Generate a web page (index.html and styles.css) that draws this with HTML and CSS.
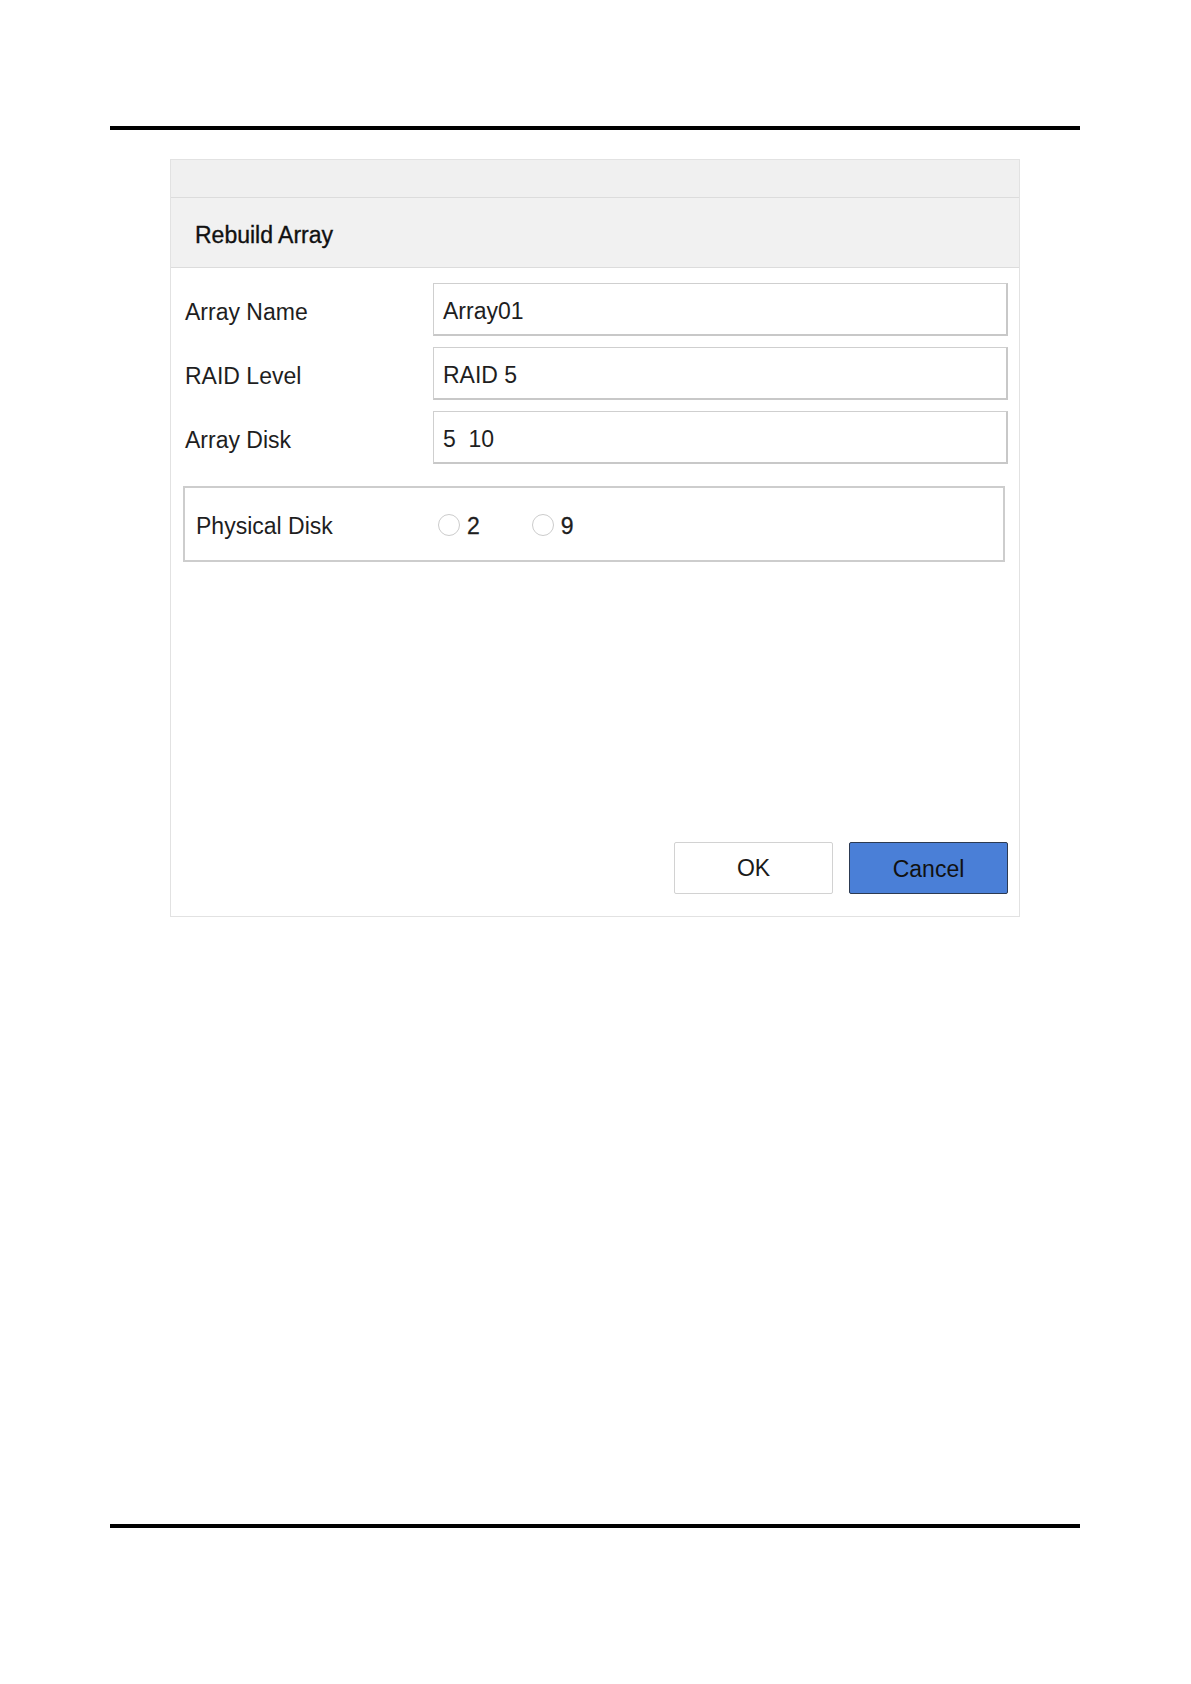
FILE: index.html
```html
<!DOCTYPE html>
<html>
<head>
<meta charset="utf-8">
<link rel="stylesheet" href="styles.css">
</head>
<body>
<div class="page">
  <div class="rule"></div>
  <div class="dialog">
    <div class="strip"></div>
    <div class="header">Rebuild Array</div>
    <div class="body">
      <div class="form">
        <div class="row"><div class="label">Array Name</div><div class="field">Array01</div></div>
        <div class="row"><div class="label">RAID Level</div><div class="field">RAID 5</div></div>
        <div class="row"><div class="label">Array Disk</div><div class="field">5&nbsp;&nbsp;10</div></div>
      </div>
      <div class="disks">
        <div class="disks-label">Physical Disk</div>
        <div class="radios">
          <label class="radio"><span class="circle"></span><span class="radio-text">2</span></label>
          <label class="radio"><span class="circle"></span><span class="radio-text">9</span></label>
        </div>
      </div>
      <div class="actions">
        <div class="btn btn-ok">OK</div>
        <div class="btn btn-cancel">Cancel</div>
      </div>
    </div>
  </div>
  <div class="rule rule-bottom"></div>
</div>
</body>
</html>
```

FILE: styles.css
```css
html, body {
  margin: 0;
  padding: 0;
  background: #fff;
}
.page {
  padding-top: 126px;
  font-family: "Liberation Sans", Arial, sans-serif;
  color: #1e1e1e;
}
.rule {
  height: 4px;
  background: #000;
  margin: 0 111px 0 110px;
}
.rule-bottom {
  margin-top: 607px;
}
.dialog {
  margin: 29px 0 0 170px;
  width: 850px;
  height: 758px;
  box-sizing: border-box;
  border: 1px solid #e2e2e2;
  background: #fff;
  display: flex;
  flex-direction: column;
}
.strip {
  height: 37px;
  background: #f0f0f0;
  border-bottom: 1px solid #dcdcdc;
}
.header {
  height: 70px;
  background: #f1f1f1;
  border-bottom: 1px solid #dcdcdc;
  box-sizing: border-box;
  display: flex;
  align-items: center;
  padding-left: 24px;
  padding-top: 5px;
  font-size: 23px;
  color: #111;
  -webkit-text-stroke: 0.35px #111;
}
.body {
  flex: 1;
  display: flex;
  flex-direction: column;
  padding: 15px 11px 22px 14px;
}
.form {
  display: flex;
  flex-direction: column;
  gap: 11px;
}
.row {
  display: flex;
  align-items: center;
  height: 53px;
}
.label {
  width: 248px;
  font-size: 23px;
  padding-top: 5px;
}
.field {
  flex: 1;
  height: 53px;
  box-sizing: border-box;
  border: 1px solid #cfcfcf;
  border-right: 2px solid #c8c8c8;
  border-bottom: 2px solid #c8c8c8;
  display: flex;
  align-items: center;
  padding-left: 9px;
  padding-top: 4px;
  font-size: 23px;
}
.disks {
  margin: 22px 3px 0 -2px;
  height: 76px;
  box-sizing: border-box;
  border: 2px solid #cdcdcd;
  display: flex;
  align-items: center;
  padding-left: 11px;
}
.disks-label {
  width: 242px;
  font-size: 23px;
  padding-top: 5px;
}
.radios {
  display: flex;
  gap: 52px;
}
.radio {
  display: flex;
  align-items: center;
  font-size: 23px;
  gap: 7px;
}
.radio-text {
  padding-top: 5px;
  -webkit-text-stroke: 0.3px #1e1e1e;
}
.circle {
  width: 22px;
  height: 22px;
  box-sizing: border-box;
  border: 1px solid #cccccc;
  border-radius: 50%;
  background: #fff;
  margin-top: 2px;
}
.actions {
  margin-top: auto;
  display: flex;
  justify-content: flex-end;
  gap: 16px;
}
.btn {
  width: 159px;
  height: 52px;
  box-sizing: border-box;
  display: flex;
  align-items: center;
  justify-content: center;
  font-size: 23px;
  border-radius: 2px;
}
.btn-ok {
  border: 1px solid #d2d2d2;
  background: #fff;
  color: #1a1a1a;
}
.btn-cancel {
  border: 1px solid #2c3a52;
  background: #4a7fd7;
  color: #111;
  padding-top: 3px;
}
```
